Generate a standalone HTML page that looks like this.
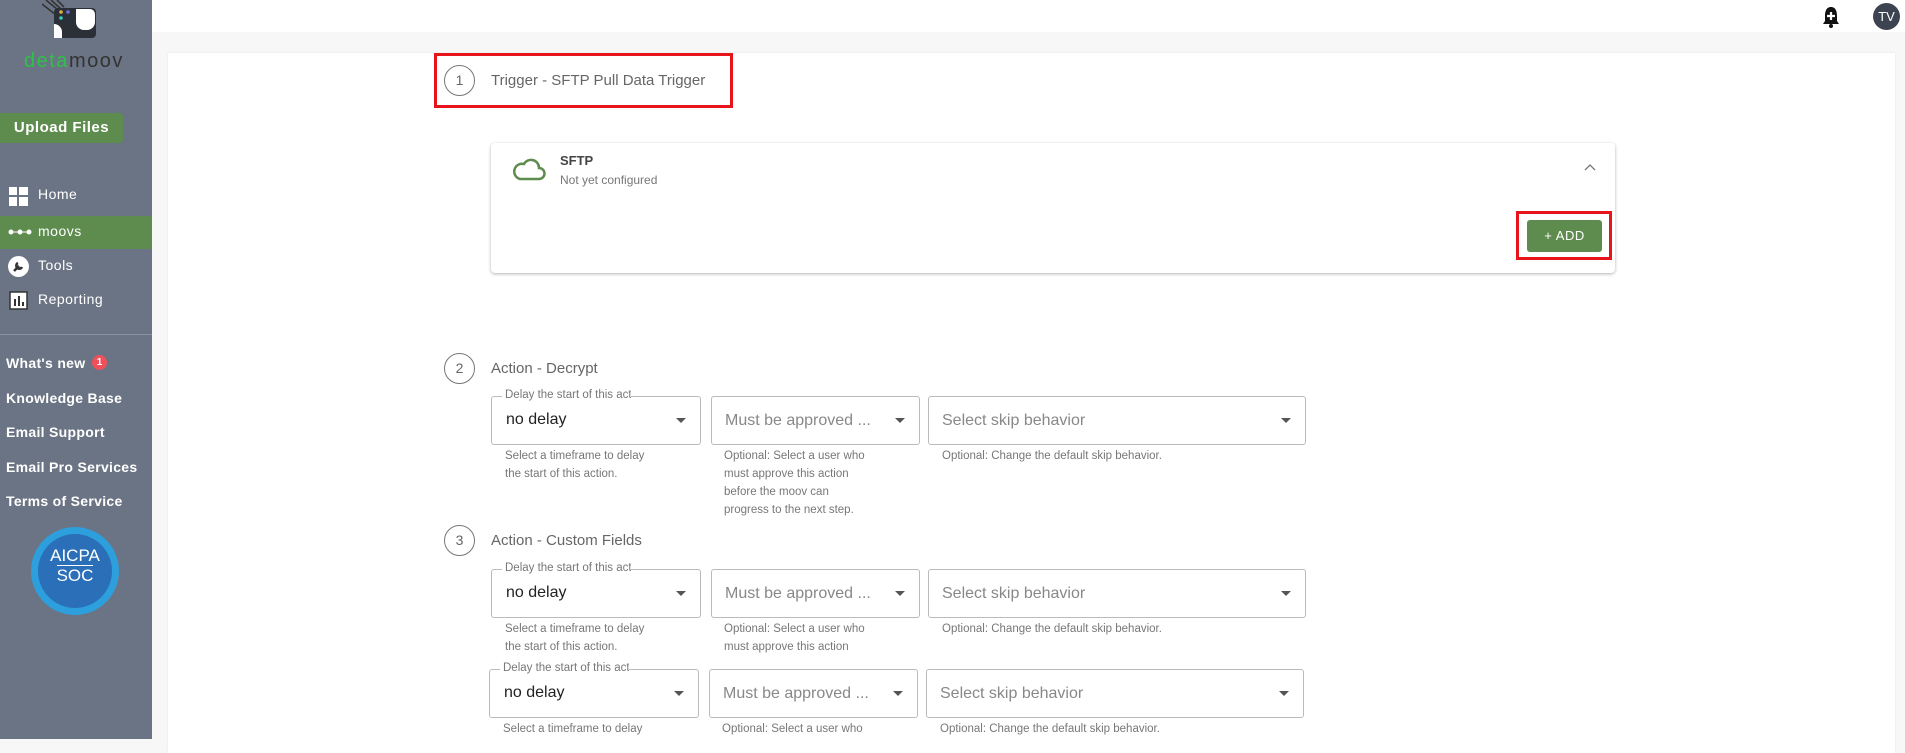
<!DOCTYPE html>
<html><head><meta charset="utf-8"><style>
*{box-sizing:border-box;margin:0;padding:0}
body{width:1905px;height:739px;overflow:hidden;background:#f7f7f7;font-family:"Liberation Sans",sans-serif;position:relative}
.a{position:absolute}
#side{left:0;top:0;width:152px;height:739px;background:#6b7484}
.nav{position:absolute;left:38px;color:#fff;font-size:14px;letter-spacing:.5px}
.lk{position:absolute;left:6px;color:#fff;font-size:14px;font-weight:bold;letter-spacing:.3px}
.circ{position:absolute;width:31px;height:31px;border:1px solid #777;border-radius:50%;text-align:center;line-height:29px;color:#666;font-size:14px}
.ttl{position:absolute;color:#666;font-size:15px}
.fld{position:absolute;height:49px;border:1px solid #bbb;border-radius:3px}
.fld .v{position:absolute;left:14px;top:14px;font-size:16px;color:#222}
.fld .p{position:absolute;left:13px;top:15px;font-size:16px;color:#888;white-space:nowrap}
.fld .lg{position:absolute;left:10px;top:-8px;background:#fff;padding:0 0 0 3px;font-size:11.5px;color:#777;white-space:nowrap;width:129px;overflow:hidden}
.fld .ar{position:absolute;right:14px;top:21px;border-left:5px solid transparent;border-right:5px solid transparent;border-top:5px solid #555}
.hl{position:absolute;font-size:11.5px;color:#777;line-height:18px}
</style></head><body>
<div class="a" style="left:152px;top:0;width:1753px;height:32px;background:#fff"></div>
<div class="a" style="left:168px;top:53px;width:1727px;height:700px;background:#fff;box-shadow:0 0 2px #e4e4e4"></div>
<div id="side" class="a">
 <svg class="a" style="left:42px;top:0" width="56" height="40" viewBox="0 0 56 40">
  <line x1="4" y1="0" x2="16" y2="10" stroke="#333" stroke-width="1.6"/><line x1="9" y1="0" x2="19" y2="9" stroke="#333" stroke-width="1.6"/><line x1="15" y1="0" x2="22" y2="7" stroke="#333" stroke-width="1.6"/><line x1="0" y1="4" x2="14" y2="15" stroke="#333" stroke-width="1.6"/>
  <rect x="12" y="8" width="42" height="30" rx="4" fill="#2b3038"/><path d="M12 24 a8 8 0 0 1 8 8 v6 h-8z" fill="#fff"/><path d="M34 9 h14 a5 5 0 0 1 5 5 v8 a8 8 0 0 1-8 8 h-3 a8 8 0 0 1-8-8 z" fill="#fff"/>
  <circle cx="19" cy="12" r="1.8" fill="#e0b23a"/><circle cx="26" cy="12" r="1.8" fill="#6a6fd6"/><circle cx="19" cy="18" r="1.8" fill="#3cb"/>
 </svg>
 <div class="a" style="left:24px;top:50px;font-size:20px;letter-spacing:1.5px"><span style="color:#2fc04a">deta</span><span style="color:#333">moov</span></div>
 <div class="a" style="left:0;top:113px;width:123px;height:30px;background:#5e8c4e;border-radius:0 3px 3px 0;color:#fff;font-weight:bold;font-size:15px;line-height:30px;text-align:center;letter-spacing:.5px">Upload Files</div>
 <div class="a" style="left:0;top:216px;width:152px;height:33px;background:#5e8c4e;border-radius:0 3px 3px 0"></div>
 <svg class="a" style="left:9px;top:187px" width="19" height="19"><rect x="0" y="0" width="8" height="8" fill="#fff"/><rect x="10" y="0" width="9" height="8" fill="#fff"/><rect x="0" y="10" width="8" height="9" fill="#fff"/><rect x="10" y="10" width="9" height="9" fill="#fff"/></svg>
 <div class="nav" style="top:186px">Home</div>
 <svg class="a" style="left:8px;top:228px" width="24" height="8"><circle cx="3" cy="4" r="2.5" fill="#fff"/><circle cx="12" cy="4" r="2.5" fill="#fff"/><circle cx="21" cy="4" r="2.5" fill="#fff"/><line x1="3" y1="4" x2="21" y2="4" stroke="#fff"/></svg>
 <div class="nav" style="top:223px">moovs</div>
 <svg class="a" style="left:8px;top:256px" width="21" height="21"><circle cx="10.5" cy="10.5" r="10.5" fill="#fff"/><path d="M6 15 L11 10 M10 7 a3 3 0 1 0 4 4" stroke="#333" stroke-width="2.5" fill="none"/></svg>
 <div class="nav" style="top:257px">Tools</div>
 <svg class="a" style="left:9px;top:291px" width="19" height="19"><rect x="1" y="1" width="17" height="17" fill="#fff" stroke="#333" stroke-width="1.5"/><rect x="5" y="8" width="2" height="7" fill="#333"/><rect x="9" y="5" width="2" height="10" fill="#333"/><rect x="13" y="11" width="2" height="4" fill="#333"/></svg>
 <div class="nav" style="top:291px">Reporting</div>
 <div class="a" style="left:0;top:334px;width:152px;height:1px;background:#8a929e"></div>
 <div class="lk" style="top:355px">What's new</div>
 <div class="a" style="left:92px;top:355px;width:15px;height:15px;border-radius:50%;background:#f0505a;color:#fff;font-size:10px;font-weight:bold;text-align:center;line-height:15px">1</div>
 <div class="lk" style="top:390px">Knowledge Base</div>
 <div class="lk" style="top:424px">Email Support</div>
 <div class="lk" style="top:459px">Email Pro Services</div>
 <div class="lk" style="top:493px">Terms of Service</div>
 <div class="a" style="left:31px;top:527px;width:88px;height:88px;border-radius:50%;background:#2d9fdc;"></div>
 <div class="a" style="left:38px;top:534px;width:74px;height:74px;border-radius:50%;background:#2a6fb8;color:#fff;text-align:center;font-size:17px;line-height:20px;padding-top:12px">AICPA<br><span style="border-top:1px solid #fff">SOC</span></div>
</div>
<svg class="a" style="left:1822px;top:6px" width="18" height="22"><path d="M9 1 C4 1 3 6 3 10 L3 15 L1 18 L17 18 L15 15 L15 10 C15 6 14 1 9 1Z" fill="#111"/><circle cx="9" cy="20" r="2" fill="#111"/><path d="M9 6v8M5 10h8" stroke="#fff" stroke-width="2.2"/></svg>
<div class="a" style="left:1873px;top:3px;width:27px;height:27px;border-radius:50%;background:#3d4451;color:#fff;font-size:13px;text-align:center;line-height:27px">TV</div>

<div class="a" style="left:434px;top:53px;width:299px;height:55px;border:3px solid #e8141c"></div>
<div class="circ" style="left:444px;top:65px">1</div>
<div class="ttl" style="left:491px;top:72px">Trigger - SFTP Pull Data Trigger</div>

<div class="a" style="left:491px;top:143px;width:1124px;height:130px;background:#fff;border-radius:4px;box-shadow:0 1px 3px rgba(0,0,0,.3)"></div>
<svg class="a" style="left:512px;top:156px" width="34" height="26"><path d="M8 23 H27 a5.5 5.5 0 0 0 0-11 a8 8 0 0 0-15-4 a7 7 0 0 0-4 15Z" fill="none" stroke="#5e8c4e" stroke-width="2.5"/></svg>
<div class="a" style="left:560px;top:153px;font-size:13px;font-weight:bold;color:#444">SFTP</div>
<div class="a" style="left:560px;top:173px;font-size:12px;color:#777">Not yet configured</div>
<svg class="a" style="left:1584px;top:163px" width="12" height="8"><path d="M1 7 L6 2 L11 7" fill="none" stroke="#777" stroke-width="1.3"/></svg>
<div class="a" style="left:1516px;top:211px;width:96px;height:49px;border:3px solid #e8141c"></div>
<div class="a" style="left:1527px;top:220px;width:75px;height:32px;background:#5e8c4e;border-radius:3px;color:#fff;font-size:13px;text-align:center;line-height:32px;letter-spacing:.5px">+ ADD</div>

<div class="circ" style="left:444px;top:353px">2</div>
<div class="ttl" style="left:491px;top:360px">Action - Decrypt</div>
<div class="fld" style="left:491px;top:396px;width:210px"><div class="lg">Delay the start of this action</div><div class="v">no delay</div><div class="ar"></div></div>
<div class="fld" style="left:711px;top:396px;width:209px"><div class="p">Must be approved ...</div><div class="ar"></div></div>
<div class="fld" style="left:928px;top:396px;width:378px"><div class="p">Select skip behavior</div><div class="ar"></div></div>
<div class="hl" style="left:505px;top:447px">Select a timeframe to delay<br>the start of this action.</div>
<div class="hl" style="left:724px;top:447px">Optional: Select a user who<br>must approve this action<br>before the moov can<br>progress to the next step.</div>
<div class="hl" style="left:942px;top:447px">Optional: Change the default skip behavior.</div>

<div class="circ" style="left:444px;top:525px">3</div>
<div class="ttl" style="left:491px;top:532px">Action - Custom Fields</div>
<div class="fld" style="left:491px;top:569px;width:210px"><div class="lg">Delay the start of this action</div><div class="v">no delay</div><div class="ar"></div></div>
<div class="fld" style="left:711px;top:569px;width:209px"><div class="p">Must be approved ...</div><div class="ar"></div></div>
<div class="fld" style="left:928px;top:569px;width:378px"><div class="p">Select skip behavior</div><div class="ar"></div></div>
<div class="hl" style="left:505px;top:620px">Select a timeframe to delay<br>the start of this action.</div>
<div class="hl" style="left:724px;top:620px">Optional: Select a user who<br>must approve this action</div>
<div class="hl" style="left:942px;top:620px">Optional: Change the default skip behavior.</div>

<div class="fld" style="left:489px;top:669px;width:210px"><div class="lg">Delay the start of this action</div><div class="v">no delay</div><div class="ar"></div></div>
<div class="fld" style="left:709px;top:669px;width:209px"><div class="p">Must be approved ...</div><div class="ar"></div></div>
<div class="fld" style="left:926px;top:669px;width:378px"><div class="p">Select skip behavior</div><div class="ar"></div></div>
<div class="hl" style="left:503px;top:720px">Select a timeframe to delay</div>
<div class="hl" style="left:722px;top:720px">Optional: Select a user who</div>
<div class="hl" style="left:940px;top:720px">Optional: Change the default skip behavior.</div>
</body></html>
